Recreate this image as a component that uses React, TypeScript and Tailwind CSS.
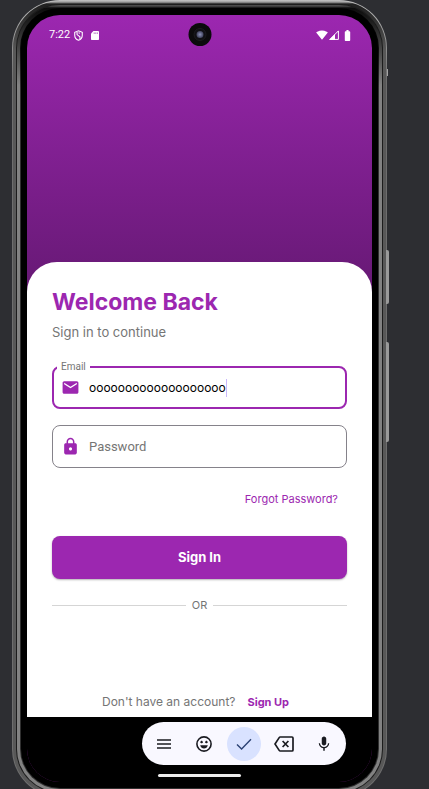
import { useState } from "react";
import type { ReactNode } from "react";
import { MdBatteryFull, MdEmail, MdLock, MdMic, MdSignalWifi4Bar } from "react-icons/md";

function ShieldIcon() {
  return (
    <svg viewBox="0 0 10 12" className="h-[11px] w-[9px]" fill="none" stroke="currentColor" strokeWidth="1.2" aria-hidden="true">
      <path d="M5 0.8 9.2 2.4V5.6C9.2 8.3 7.5 10.4 5 11.3 2.5 10.4 0.8 8.3 0.8 5.6V2.4Z" />
      <path d="M3.4 2.2V5L6.6 7.4V9.8M6.6 3.4 5 3" />
    </svg>
  );
}

function SdCardIcon() {
  return (
    <svg viewBox="0 0 8 9" className="h-[9px] w-2" aria-hidden="true">
      <path d="M2.4 0H7.2Q8 0 8 .8V8.2Q8 9 7.2 9H.8Q0 9 0 8.2V2.4Z" fill="currentColor" />
      <path d="M3.2 1.4V3M4.8 1.4V3M6.4 1.4V3" stroke="#9426a8" strokeWidth="0.6" />
    </svg>
  );
}

function SignalIcon() {
  return (
    <svg viewBox="0 0 10 10" className="size-[10px]" aria-hidden="true">
      <path d="M9.4 0.9V9.4H0.9Z" fill="none" stroke="currentColor" strokeWidth="1" />
      <path d="M0 10 6 4V10Z" fill="currentColor" />
    </svg>
  );
}

function MenuIcon() {
  return (
    <svg viewBox="0 0 16 12" className="h-3 w-4" stroke="currentColor" strokeWidth="1.4" aria-hidden="true">
      <path d="M1 2H15M1 6H15M1 10H15" />
    </svg>
  );
}

function SmileIcon() {
  return (
    <svg viewBox="0 0 16 16" className="size-4" fill="none" stroke="currentColor" aria-hidden="true">
      <circle cx="8" cy="8" r="7.1" strokeWidth="1.6" />
      <path d="M4.2 6.1H7M5.6 4.8V7.2M9 6.1H11.8M10.4 4.8V7.2" strokeWidth="1.1" />
      <path d="M4.2 9.2H11.8C11.2 11.4 9.8 12.4 8 12.4S4.8 11.4 4.2 9.2Z" fill="currentColor" stroke="none" />
    </svg>
  );
}

function CheckIcon() {
  return (
    <svg viewBox="0 0 16 12" className="h-3 w-4" fill="none" stroke="currentColor" strokeWidth="1.4" aria-hidden="true">
      <path d="M1 6.4 5.6 11 15 1.2" />
    </svg>
  );
}

function BackspaceIcon() {
  return (
    <svg viewBox="0 0 20 16" className="h-4 w-5" fill="none" stroke="currentColor" strokeWidth="1.7" aria-hidden="true">
      <path d="M6.2 1H18Q19 1 19 2V14Q19 15 18 15H6.2Q5.6 15 5.2 14.4L1 8 5.2 1.6Q5.6 1 6.2 1Z" />
      <path d="M8.6 5 14.4 11M14.4 5 8.6 11" />
    </svg>
  );
}

function KeyButton({ label, active = false, children }: { label: string; active?: boolean; children: ReactNode }) {
  return (
    <button
      type="button"
      aria-label={label}
      className={
        active
          ? "flex size-[34px] items-center justify-center rounded-full bg-[#d9e2ff] text-[#2c4274]"
          : "flex size-[34px] items-center justify-center rounded-full text-[#1a1b21]"
      }
    >
      {children}
    </button>
  );
}

function StatusBar() {
  return (
    <div className="relative flex h-10 items-center justify-between pr-[18px] pl-[22px] text-white">
      <div className="flex items-center">
        <span className="font-['Roboto',sans-serif] text-[11px]">7:22</span>
        <span className="ml-1 flex items-center gap-2">
          <ShieldIcon />
          <SdCardIcon />
        </span>
      </div>
      <div className="absolute top-2 left-1/2 flex size-[23px] -translate-x-1/2 items-center justify-center rounded-full bg-[#0b0b0c]">
        <div className="flex size-[13px] items-center justify-center rounded-full border border-[#1c1c1f] bg-[#101014]">
          <div className="size-[7px] rounded-full bg-radial from-[#8d94b8] to-[#23243a]" />
        </div>
      </div>
      <div className="flex items-center">
        <MdSignalWifi4Bar className="size-3" />
        <span className="ml-px">
          <SignalIcon />
        </span>
        <MdBatteryFull className="ml-[2px] size-[13px]" />
      </div>
    </div>
  );
}

function SignInCard() {
  const [email, setEmail] = useState("ooooooooooooooooooo");
  const [password, setPassword] = useState("");
  return (
    <form
      className="flex grow flex-col rounded-t-[30px] bg-white px-[25px] pt-6 pb-[5px]"
      onSubmit={(event) => event.preventDefault()}
    >
      <h1 className="text-[23px] leading-8 font-bold text-[#9c27b0]">Welcome Back</h1>
      <p className="mt-1 text-[13px] leading-5 text-[#757575]">Sign in to continue</p>

      <div className="relative mt-6 flex h-[43px] items-center rounded-lg border-2 border-[#9c27b0] px-[7px]">
        <label
          htmlFor="email"
          className="absolute -top-2 left-[3px] bg-white px-1 font-['Roboto',sans-serif] text-[10px] leading-[14px] text-[#757575]"
        >
          Email
        </label>
        <MdEmail className="size-[19px] shrink-0 text-[#9c27b0]" />
        <input
          id="email"
          type="text"
          value={email}
          onChange={(event) => setEmail(event.target.value)}
          className="field-sizing-content ml-[9px] max-w-full text-[12px] leading-5 text-black outline-none"
        />
        <span className="h-[18px] w-px bg-[#c9b8fb]" />
      </div>

      <div className="mt-4 flex h-[43px] items-center rounded-lg border border-[#85828a] px-2">
        <MdLock className="size-[19px] shrink-0 text-[#9c27b0]" />
        <input
          aria-label="Password"
          type="password"
          placeholder="Password"
          value={password}
          onChange={(event) => setPassword(event.target.value)}
          className="ml-[9px] min-w-0 grow font-['Roboto',sans-serif] text-[13px] leading-5 outline-none placeholder:text-[#757575]"
        />
      </div>

      <a href="#forgot" className="mt-[21px] mr-[9px] self-end text-[11px] leading-5 text-[#9c27b0]">
        Forgot Password?
      </a>

      <button
        type="submit"
        className="mt-[27px] h-[43px] shrink-0 rounded-lg bg-[#9c27b0] text-[13px] font-bold text-white shadow-[0_1px_2px_rgba(0,0,0,0.3)]"
      >
        Sign In
      </button>

      <div className="mt-4 flex items-center gap-[6px] text-[11px] leading-5 text-[#757575]">
        <span className="h-px grow bg-[#d5d5d5]" />
        OR
        <span className="h-px grow bg-[#d5d5d5]" />
      </div>

      <p className="mt-auto flex justify-center gap-3 pr-2 text-[12px] leading-5 text-[#757575]">
        Don't have an account?
        <a href="#signup" className="text-[11px] font-bold text-[#9c27b0]">
          Sign Up
        </a>
      </p>
    </form>
  );
}

function Keyboard() {
  return (
    <div className="flex flex-col items-center bg-black pt-[5px] pb-[5px]">
      <div className="mr-[26px] flex h-[43px] items-center gap-[6px] self-end rounded-full bg-[#f9f8ff] px-[5px]">
        <KeyButton label="Menu">
          <MenuIcon />
        </KeyButton>
        <KeyButton label="Emoji">
          <SmileIcon />
        </KeyButton>
        <KeyButton label="Done" active>
          <CheckIcon />
        </KeyButton>
        <KeyButton label="Backspace">
          <BackspaceIcon />
        </KeyButton>
        <KeyButton label="Voice input">
          <MdMic className="size-[18px]" />
        </KeyButton>
      </div>
      <div className="mt-[9px] h-[3px] w-[83px] rounded-full bg-[#ececec]" />
    </div>
  );
}

export default function App() {
  return (
    <div className="h-screen overflow-hidden bg-[#2d2e32] pr-[42px] pl-3 font-['Inter',sans-serif]">
      <div className="relative flex h-[calc(100vh+8px)] rounded-[48px] bg-linear-to-b from-[#bdbdbd] to-[#6e6e6e] to-10% p-px">
        <span className="absolute top-[69px] -right-px h-[7px] w-px bg-[#a5a5a5]" />
        <span className="absolute top-[250px] -right-[2px] h-[54px] w-[3px] rounded-r-xs bg-[#9a9a9a]" />
        <span className="absolute top-[342px] -right-[2px] h-[100px] w-[3px] rounded-r-xs bg-[#9a9a9a]" />
        <div className="flex grow rounded-[47px] bg-linear-to-b from-[#a8a8a8] from-[1px] via-[#202020] via-[3px] to-[#585858] to-[50px] p-[3px]">
          <div className="flex grow rounded-[44px] bg-[#1c1c1c] p-px">
            <div className="flex grow rounded-[43px] bg-linear-to-b from-[#4a4a4a] from-[1px] via-[#0c0c0c] via-[3px] to-[#828282] to-[80px] p-[3px]">
              <div className="flex grow rounded-[40px] bg-linear-to-b from-black to-[#303030] to-[80px] p-px">
                <div className="flex grow rounded-[39px] bg-black p-[6px]">
                  <div className="flex min-w-0 grow flex-col overflow-hidden rounded-[33px] bg-linear-to-b from-[#9c27b0] to-[#671975] to-[275px]">
                    <StatusBar />
                    <div className="h-[207px] shrink-0" />
                    <SignInCard />
                    <Keyboard />
                  </div>
                </div>
              </div>
            </div>
          </div>
        </div>
      </div>
    </div>
  );
}
